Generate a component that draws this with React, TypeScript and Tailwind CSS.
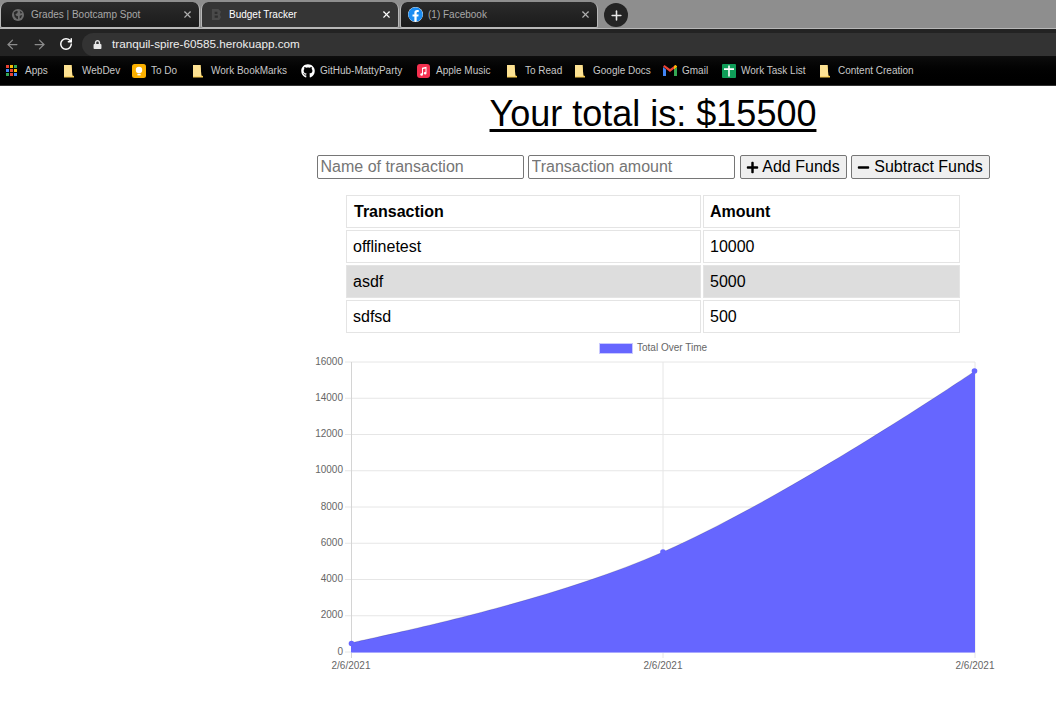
import { ArrowLeft, ArrowRight, Plus, RotateCw, X } from 'lucide-react';
import { FaFacebook, FaGithub, FaLock, FaMinus, FaPlus } from 'react-icons/fa';

const ticks = [16000, 14000, 12000, 10000, 8000, 6000, 4000, 2000, 0];

function Folder() {
  return (
    <svg width="12" height="14" viewBox="0 0 12 14" className="shrink-0">
      <path d="M1 1h7.5l.8 10.5L11 12v1.4H1z" fill="#f7c948" />
      <path d="M1 1h7.5l.9 11.5H1z" fill="#fde293" />
    </svg>
  );
}

function AppsGrid() {
  const colors = ['#ea4335', '#fbbc04', '#34a853', '#4285f4', '#ea4335', '#fbbc04', '#34a853', '#ea4335', '#4285f4'];
  return (
    <div className="grid grid-cols-3 gap-[1px] w-[11px] shrink-0">
      {colors.map((c, i) => (
        <span key={i} className="w-[3px] h-[3px]" style={{ backgroundColor: c }} />
      ))}
    </div>
  );
}

function KeepIcon() {
  return (
    <svg width="14" height="14" viewBox="0 0 14 14" className="shrink-0">
      <rect width="14" height="14" rx="2.5" fill="#fbb000" />
      <circle cx="7" cy="6" r="3.2" fill="#fff" />
      <rect x="5.4" y="9.8" width="3.2" height="1.6" fill="#fff" />
    </svg>
  );
}

function MusicIcon() {
  return (
    <svg width="13" height="14" viewBox="0 0 13 14" className="shrink-0">
      <rect width="13" height="14" rx="3" fill="#f5304f" />
      <path d="M5 3.8l4.5-1v6.4a1.4 1.2 0 1 1-1-1.1V4.5L6 5.1v5.3a1.4 1.2 0 1 1-1-1.1z" fill="#fff" />
    </svg>
  );
}

function GmailIcon() {
  return (
    <svg width="14" height="11" viewBox="0 0 14 11" className="shrink-0">
      <path d="M0 2v9h3V4.5z" fill="#4285f4" />
      <path d="M11 4.5V11h3V2z" fill="#34a853" />
      <path d="M0 1.5 7 7l7-5.5L12.5 0 7 4 1.5 0z" fill="#ea4335" />
      <path d="M11 4.5 14 2V1.2L12.5 0 11 1.1z" fill="#fbbc04" />
    </svg>
  );
}

function TasksIcon() {
  return (
    <svg width="14" height="14" viewBox="0 0 14 14" className="shrink-0">
      <rect width="14" height="14" rx="1" fill="#0f9d58" />
      <path d="M6.2 1.5h1.6v2.8H12v1.6H7.8v6.6H6.2V5.900H2V4.300h4.200z" fill="#fff" />
    </svg>
  );
}

function GlobeIcon() {
  return (
    <svg width="12" height="12" viewBox="0 0 14 14" className="shrink-0">
      <circle cx="7" cy="7" r="7" fill="#6d6d6d" />
      <path d="M2 4l3-2 2 1-1 2-2 1 1 2 2 .5v3L6 12 3 9zM9 2l3 2.500-2 1zM9 8l3-1-1.500 3.500L9 11z" fill="#2a2a2a" />
    </svg>
  );
}

function BudgetIcon() {
  return (
    <svg width="11" height="13" viewBox="0 0 12 14" className="shrink-0">
      <path d="M1 1h7l3 3-1.500 3L11 10l-2 3H1z" fill="#4a4a4a" />
      <path d="M4 4h3v2.500H4zM4 8h3.500v2.500H4z" fill="#2e2e2e" />
    </svg>
  );
}

function Tab({ title, icon, active, width, pad }: { title: string; icon: React.ReactNode; active?: boolean; width: string; pad: string }) {
  return (
    <div
      className={`${width} ${pad} h-[26px] flex items-center pr-[6px] rounded-t-[7px] rounded-b-[2px] border-b border-x border-[#b8b8b8] ${
        active ? 'bg-[#353535] text-white' : 'bg-gradient-to-b from-[#2b2b2b] to-[#1b1b1b] text-[#a8a8a8]'
      }`}
    >
      <div className="w-[14px] flex justify-center">{icon}</div>
      <span className="ml-[6px] text-[10px] flex-1 truncate">{title}</span>
      <X size={11} strokeWidth={2.5} className={active ? 'text-white' : 'text-[#b0b0b0]'} />
    </div>
  );
}

function Bookmark({ icon, label, width }: { icon: React.ReactNode; label: string; width: string }) {
  return (
    <div className={`${width} flex items-center gap-[5px] shrink-0`}>
      <div className="w-[14px] flex">{icon}</div>
      <span className="text-[10px] text-[#c8c8c8] whitespace-nowrap">{label}</span>
    </div>
  );
}

export default function App() {
  return (
    <div className="min-h-[712px] bg-white font-['Liberation_Sans',Arial,sans-serif]">
      {/* browser chrome */}
      <div className="h-[29px] bg-[#8e8e8e] flex items-end pt-[2px] gap-[1px] border-b border-[#b8b8b8]">
        <Tab title="Grades | Bootcamp Spot" icon={<GlobeIcon />} width="w-[200px]" pad="pl-[10px]" />
        <Tab title="Budget Tracker" icon={<BudgetIcon />} active width="w-[198px]" pad="pl-[7px]" />
        <Tab title="(1) Facebook" icon={<FaFacebook size={15} className="text-[#1b8cf2] bg-white rounded-full shrink-0" />} width="w-[198px]" pad="pl-[7px]" />
        <div className="ml-[5px] mb-[1px] w-[24px] h-[24px] rounded-full bg-[#242424] flex items-center justify-center">
          <Plus size={15} strokeWidth={2.5} className="text-[#e8e8e8]" />
        </div>
      </div>
      <div className="h-[27px] bg-[#232323] flex items-center pl-[5px] pt-[3px]">
        <ArrowLeft size={15} className="text-[#8c8c8c]" />
        <ArrowRight size={15} className="text-[#8c8c8c] ml-[12px]" />
        <RotateCw size={14} strokeWidth={2.5} className="text-white ml-[12px]" />
        <div className="ml-[9px] flex-1 h-[23px] rounded-l-full bg-[#333333] flex items-center pl-[11px]">
          <FaLock size={9} className="text-[#e8e8e8]" />
          <span className="ml-[10px] text-[11.7px] text-[#eeeeee]">tranquil-spire-60585.herokuapp.com</span>
        </div>
      </div>
      <div className="h-[30px] bg-gradient-to-b from-[#0e0e0e] to-black flex items-center pl-[6px] border-b border-[#333333]">
        <Bookmark icon={<AppsGrid />} label="Apps" width="w-[57px]" />
        <Bookmark icon={<Folder />} label="WebDev" width="w-[69px]" />
        <Bookmark icon={<KeepIcon />} label="To Do" width="w-[60px]" />
        <Bookmark icon={<Folder />} label="Work BookMarks" width="w-[109px]" />
        <Bookmark icon={<FaGithub size={14} className="text-white shrink-0" />} label="GitHub-MattyParty" width="w-[116px]" />
        <Bookmark icon={<MusicIcon />} label="Apple Music" width="w-[89px]" />
        <Bookmark icon={<Folder />} label="To Read" width="w-[68px]" />
        <Bookmark icon={<Folder />} label="Google Docs" width="w-[89px]" />
        <Bookmark icon={<GmailIcon />} label="Gmail" width="w-[59px]" />
        <Bookmark icon={<TasksIcon />} label="Work Task List" width="w-[97px]" />
        <Bookmark icon={<Folder />} label="Content Creation" width="w-[100px]" />
      </div>

      {/* page */}
      <div className="ml-[300px] w-[706px] flex flex-col items-center text-black">
        <h1 className="mt-[6px] text-[36px] leading-[44px] underline decoration-[3px] underline-offset-[3px]">Your total is: $15500</h1>
        <form className="mt-[19px] flex items-center gap-[4px] w-[673px]">
          <input
            placeholder="Name of transaction"
            className="w-[207px] h-[24px] px-[3px] border border-[#767676] rounded-[2px] text-[16px] placeholder:text-[#757575]"
          />
          <input
            placeholder="Transaction amount"
            className="w-[207px] h-[24px] px-[3px] border border-[#767676] rounded-[2px] text-[16px] placeholder:text-[#757575]"
          />
          <button type="button" className="ml-[1px] w-[107px] h-[24px] bg-[#efefef] border border-[#767676] rounded-[2px] text-[16px] flex items-center justify-center gap-[3px]">
            <FaPlus size={13} />
            Add Funds
          </button>
          <button type="button" className="w-[139px] h-[24px] bg-[#efefef] border border-[#767676] rounded-[2px] text-[16px] flex items-center justify-center gap-[4px]">
            <FaMinus size={13} />
            Subtract Funds
          </button>
        </form>
        <table className="mt-[14px] w-[618px] border-separate border-spacing-[2px] text-[16px] table-fixed">
          <thead>
            <tr>
              <th className="w-[355px] h-[33px] border border-[#e4e4e4] text-left pl-[7px] font-bold">Transaction</th>
              <th className="h-[33px] border border-[#e4e4e4] text-left pl-[6px] font-bold">Amount</th>
            </tr>
          </thead>
          <tbody>
            {[
              ['offlinetest', '10000', ''],
              ['asdf', '5000', 'bg-[#dddddd]'],
              ['sdfsd', '500', ''],
            ].map(([name, amount, bg]) => (
              <tr key={name}>
                <td className={`h-[33px] border border-[#e4e4e4] pl-[6px] ${bg}`}>{name}</td>
                <td className={`h-[33px] border border-[#e4e4e4] pl-[6px] ${bg}`}>{amount}</td>
              </tr>
            ))}
          </tbody>
        </table>
        <svg width="706" height="340" viewBox="300 340 706 340" className="mt-[5px] block">
          <rect x="599.5" y="343.500" width="33" height="10" fill="#6666ff" stroke="#c9c9ff" />
          <text x="637" y="351" fontSize="10" fill="#666666">Total Over Time</text>
          {ticks.map((t, i) => {
            const y = 362 + i * 36.25;
            return (
              <g key={t}>
                <line x1="345" x2="975" y1={y} y2={y} stroke="#e6e6e6" />
                <text x="343" y={y + 2.5} fontSize="10" fill="#666666" textAnchor="end">{t}</text>
              </g>
            );
          })}
          <line x1="351.5" x2="351.5" y1="362" y2="658" stroke="#d4d4d4" />
          <line x1="663" x2="663" y1="362" y2="658" stroke="#e6e6e6" />
          <line x1="975" x2="975" y1="362" y2="658" stroke="#e6e6e6" />
          <path d="M351 643C375 637 545 604 663 552C794 494 975 371 975 371V652H351Z" fill="#6666ff" />
          <path d="M351 643C375 637 545 604 663 552C794 494 975 371 975 371" fill="none" stroke="#000000" strokeOpacity="0.15" strokeWidth="1" />
          <line x1="351" x2="975" y1="652.5" y2="652.5" stroke="#a9a9ff" />
          <circle cx="351.5" cy="643.5" r="2.8" fill="#6666ff" />
          <circle cx="663" cy="552" r="2.8" fill="#6666ff" />
          <circle cx="974.5" cy="371" r="2.8" fill="#6666ff" />
          {[351, 663, 975].map((x) => (
            <text key={x} x={x} y="669" fontSize="10" fill="#666666" textAnchor="middle">2/6/2021</text>
          ))}
        </svg>
      </div>
    </div>
  );
}
